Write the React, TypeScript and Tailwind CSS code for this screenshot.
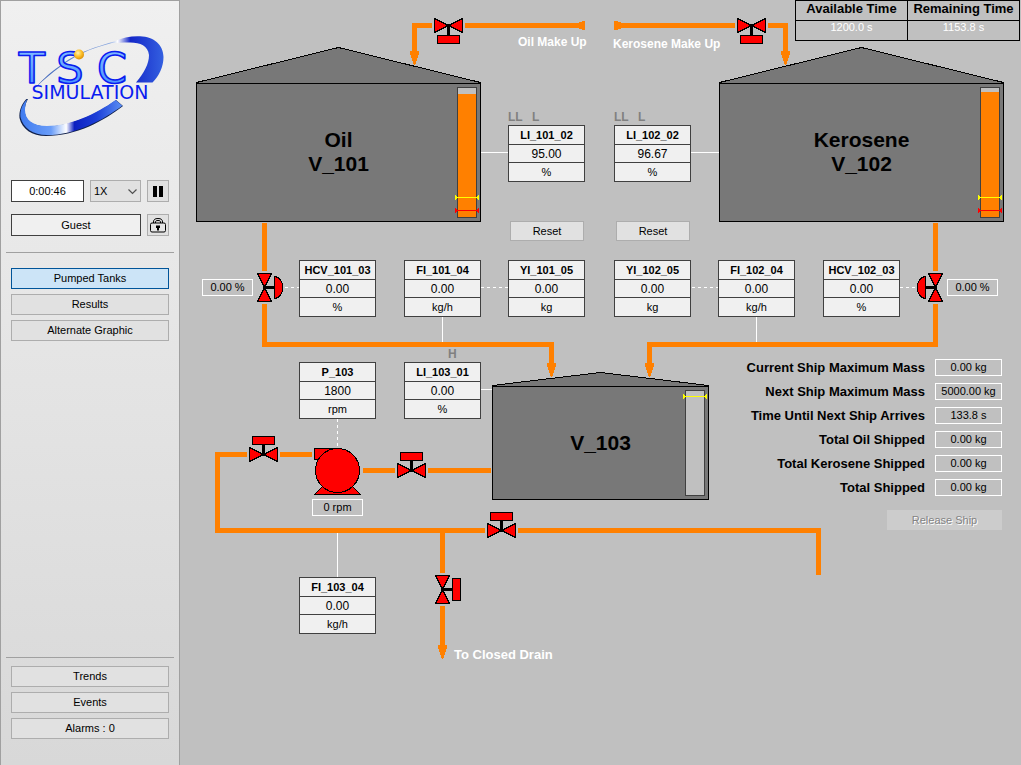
import { useState } from 'react';
import type { ReactNode } from 'react';
import clsx from 'clsx';

type TagData = {
  name: string;
  value: string;
  unit: string;
  place: string;
};

// Positions are canvas pixels, measured from the left edge of the graphic
const tags: TagData[] = [
  { name: 'LI_101_02', value: '95.00', unit: '%', place: 'left-[328px] top-[125px]' },
  { name: 'LI_102_02', value: '96.67', unit: '%', place: 'left-[434px] top-[125px]' },
  { name: 'HCV_101_03', value: '0.00', unit: '%', place: 'left-[119px] top-[260px]' },
  { name: 'FI_101_04', value: '0.00', unit: 'kg/h', place: 'left-[224px] top-[260px]' },
  { name: 'YI_101_05', value: '0.00', unit: 'kg', place: 'left-[328px] top-[260px]' },
  { name: 'YI_102_05', value: '0.00', unit: 'kg', place: 'left-[434px] top-[260px]' },
  { name: 'FI_102_04', value: '0.00', unit: 'kg/h', place: 'left-[538px] top-[260px]' },
  { name: 'HCV_102_03', value: '0.00', unit: '%', place: 'left-[643px] top-[260px]' },
  { name: 'P_103', value: '1800', unit: 'rpm', place: 'left-[119px] top-[362px]' },
  { name: 'LI_103_01', value: '0.00', unit: '%', place: 'left-[224px] top-[362px]' },
  { name: 'FI_103_04', value: '0.00', unit: 'kg/h', place: 'left-[119px] top-[577px]' },
];

const shipRows = [
  ['Current Ship Maximum Mass', '0.00 kg'],
  ['Next Ship Maximum Mass', '5000.00 kg'],
  ['Time Until Next Ship Arrives', '133.8 s'],
  ['Total Oil Shipped', '0.00 kg'],
  ['Total Kerosene Shipped', '0.00 kg'],
  ['Total Shipped', '0.00 kg'],
];

const pages = ['Pumped Tanks', 'Results', 'Alternate Graphic'];

function Logo() {
  return (
    <svg width="152" height="104" viewBox="0 0 152 104" role="img" aria-label="TSC Simulation">
      <defs>
        <linearGradient id="swooshTop" x1="0" y1="0" x2="1" y2="0">
          <stop offset="0" stopColor="#3b62b8" />
          <stop offset="0.58" stopColor="#8aa8e0" />
          <stop offset="0.64" stopColor="#ffffff" />
          <stop offset="0.74" stopColor="#1427c8" />
          <stop offset="1" stopColor="#3460e0" />
        </linearGradient>
        <linearGradient id="swooshBottom" x1="0" y1="0" x2="1" y2="0">
          <stop offset="0" stopColor="#3f7bf0" />
          <stop offset="0.3" stopColor="#6a9df8" />
          <stop offset="0.45" stopColor="#ffffff" />
          <stop offset="0.53" stopColor="#0c1fc0" />
          <stop offset="0.75" stopColor="#1c3fd8" />
          <stop offset="1" stopColor="#5c90f4" />
        </linearGradient>
        <linearGradient id="tube" x1="0" y1="0" x2="0" y2="1">
          <stop offset="0" stopColor="#8cc4ff" />
          <stop offset="1" stopColor="#3d8bff" />
        </linearGradient>
        <radialGradient id="ball" cx="0.4" cy="0.35" r="0.7">
          <stop offset="0" stopColor="#fff3b0" />
          <stop offset="0.5" stopColor="#fdc22d" />
          <stop offset="1" stopColor="#d98a00" />
        </radialGradient>
      </defs>
      <path
        d="M21.500 52.700C30 43 37 37 45 31.500C58 21 72 14.500 100 6.500C108 2.500 118 0.800 126 1.200C140 1.500 149.500 10 149.500 22C149.500 32 145 41 138.500 47.500H122C130 38 135 29 135 20C134 11 126 7.500 116 7.600C108 7.700 103 8 98 8C76 13.500 60 21 46 32C38 38 30 44.500 21.500 52.700Z"
        fill="url(#swooshTop)"
      />
      <path
        d="M12.300 64C7 70 5 76 5.500 83C8 94 18 101 32 101C62 101 90 86 109 71L102 65C82 80 56 91.500 32 91.500C18 91 10.500 85 10.800 75C11 71 12 67 14 64Z"
        fill="#10204a"
      />
      <path
        d="M13.300 64C7.500 70 6 76 6.500 82C9 93 19 100 33 100C62 100 89 85 108.300 70.700L101.700 65C82 79 56 91 33 91C19 91 11 85 11 75C11 71 12 67 13.300 64Z"
        fill="url(#swooshBottom)"
      />
      <g
        fill="url(#tube)"
        stroke="#0a1cf0"
        strokeWidth="1.6"
        strokeLinejoin="round"
        textAnchor="middle"
        className="font-['DejaVu_Sans'] text-[43px]"
      >
        <text x="18" y="48">T</text>
        <text x="56" y="48">S</text>
        <text x="98" y="48">C</text>
      </g>
      <text x="76" y="64" fill="#0a1cf0" textAnchor="middle" className="font-['DejaVu_Sans'] text-[19px]">
        SIMULATION
      </text>
      <circle cx="65" cy="19.500" r="5" fill="url(#ball)" />
    </svg>
  );
}

function LockIcon() {
  return (
    <svg width="16" height="15" viewBox="0 0 16 15" fill="none" stroke="black">
      <path d="M3.500 5V4C3.500 1.500 5 0.500 8 0.500C11 0.500 12.500 1.500 12.500 4V5M5.500 5V4C5.500 3 6 2.500 8 2.500C10 2.500 10.500 3 10.500 4V5" />
      <rect x="0.500" y="5" width="15" height="9" rx="1.500" fill="#e6e6e6" />
      <path d="M6 7.500H10V10H9V12.500H7V10H6Z" fill="black" stroke="none" />
    </svg>
  );
}

function SideButton({ active, onClick, children }: { active?: boolean; onClick?: () => void; children: ReactNode }) {
  return (
    <button
      onClick={onClick}
      className={clsx(
        'h-[21px] border text-center leading-none',
        active ? 'border-[#005499] bg-[#cce4f7]' : 'border-[#adadad] bg-[#e1e1e1]'
      )}
    >
      {children}
    </button>
  );
}

function Sidebar() {
  const [page, setPage] = useState('Pumped Tanks');
  const iconButton = 'flex size-[22px] items-center justify-center border border-[#adadad] bg-[#e1e1e1]';

  return (
    <aside className="flex w-[180px] shrink-0 flex-col border border-b-0 border-[#a0a0a0] bg-linear-to-b from-[#f0f0f0] to-[#d8d8d8] px-[5px] pt-[34px] pb-[26px]">
      <div className="flex justify-center">
        <Logo />
      </div>

      <div className="mt-[41px] flex flex-col gap-3 px-[5px]">
        <div className="flex justify-between">
          <input
            readOnly
            aria-label="Simulation time"
            value="0:00:46"
            className="h-[22px] w-[73px] border border-[#404040] bg-white text-center"
          />
          <div className="relative">
            <select
              aria-label="Speed"
              className="h-[22px] w-[51px] appearance-none border border-[#adadad] bg-[#e1e1e1] pl-[3px]"
            >
              <option>1X</option>
              <option>2X</option>
              <option>5X</option>
            </select>
            <svg
              width="9"
              height="6"
              viewBox="0 0 9 6"
              fill="none"
              stroke="#505050"
              strokeWidth="1.2"
              className="pointer-events-none absolute top-[9px] right-1"
            >
              <path d="M0.500 0.500L4.500 4.500L8.500 0.500" />
            </svg>
          </div>
          <button aria-label="Pause" className={iconButton}>
            <svg width="10" height="11" viewBox="0 0 10 11">
              <path d="M0 0H4V11H0ZM6 0H10V11H6Z" />
            </svg>
          </button>
        </div>
        <div className="flex justify-between">
          <button className="h-[22px] w-[130px] border border-[#404040] bg-[#f0f0f0] leading-none">Guest</button>
          <button aria-label="Lock" className={iconButton}>
            <LockIcon />
          </button>
        </div>
      </div>

      <hr className="mt-4 border-[#a0a0a0]" />
      <nav className="mt-[15px] flex flex-col gap-[5px] px-[5px]">
        {pages.map(p => (
          <SideButton key={p} active={p === page} onClick={() => setPage(p)}>
            {p}
          </SideButton>
        ))}
      </nav>

      <div className="mt-auto">
        <hr className="border-[#a0a0a0]" />
        <div className="mt-2 flex flex-col gap-[5px] px-[5px]">
          <SideButton>Trends</SideButton>
          <SideButton>Events</SideButton>
          <SideButton>Alarms : 0</SideButton>
        </div>
      </div>
    </aside>
  );
}

function Tag({ name, value, unit, place }: TagData) {
  return (
    <div
      className={clsx(
        'absolute grid w-[77px] grid-rows-[19px_18px_18px] divide-y divide-[#404040] border border-[#404040] bg-[#f0f0f0] text-center',
        place
      )}
    >
      <div className="leading-[18px] font-bold">{name}</div>
      <div className="text-xs leading-[18px]">{value}</div>
      <div className="leading-[18px]">{unit}</div>
    </div>
  );
}

function Readout({ className, children }: { className?: string; children: ReactNode }) {
  return (
    <output className={clsx('block h-[17px] border border-white text-center leading-[15px]', className)}>
      {children}
    </output>
  );
}

// Block valve, or control valve when it has a dome. The actuator hangs below at turn = 0.
function Valve({ x, y, turn = 0, dome }: { x: number; y: number; turn?: number; dome?: boolean }) {
  return (
    <g transform={`translate(${x} ${y}) rotate(${turn})`} fill="#ff0000" stroke="black">
      <path d="M-14 -7L0 0L-14 7ZM14 -7L0 0L14 7Z" />
      <path d="M0 0V10" strokeWidth="3" />
      <path d="M-2.500 0H2.500" strokeWidth="3" />
      {dome ? <path d="M-11 10H11C10 21 -10 21 -11 10Z" /> : <rect x="-11" y="10" width="22" height="8" />}
    </g>
  );
}

function Arrow({ x, y }: { x: number; y: number }) {
  return <path transform={`translate(${x} ${y})`} d="M-4.500 -14H4.500V-11L0.500 0H-0.500L-4.500 -11Z" fill="#ff8000" />;
}

function Marker({ x, y, color }: { x: number; y: number; color: string }) {
  return (
    <g transform={`translate(${x} ${y})`} fill={color}>
      <path d="M0 0H24V1H0Z" />
      <path d="M0 -2H1V-1H2V2H1V3H0ZM24 -2H23V-1H22V2H23V3H24Z" />
    </g>
  );
}

type TankProps = {
  x: number;
  apex: number;
  top: number;
  width: number;
  bottom: number;
  level: number;
};

function Tank({ x, apex, top, width, bottom, level }: TankProps) {
  const barX = x + width - 23;
  const barHeight = bottom - top - 9;
  const fill = Math.round((barHeight - 1) * level);

  return (
    <g stroke="black">
      <path
        d={`M${x} ${bottom}V${top}L${x + width / 2} ${apex}L${x + width} ${top}V${bottom}Z`}
        fill="#787878"
      />
      <path d={`M${x} ${top + 1}H${x + width}`} />
      <rect x={barX} y={top + 5} width="19" height={barHeight} fill="#c0c0c0" stroke="#404040" />
      {level > 0 && (
        <rect
          x={barX + 0.5}
          y={top + 4.5 + barHeight - fill}
          width="18"
          height={fill}
          fill="#ff8000"
          stroke="none"
        />
      )}
    </g>
  );
}

function ProcessDrawing() {
  return (
    <svg className="absolute inset-0 size-full" shapeRendering="crispEdges" fill="none" aria-hidden="true">
      {/* Signal lines */}
      <g stroke="white">
        <path d="M301 152.500H328M511 152.500H539M262.500 317V342M576.500 317V342M301 389.500H312M157.500 533V577" />
        <path
          d="M105 287.500H119M301 287.500H328M512 287.500H538M720 287.500H737M157.500 419V447"
          strokeDasharray="3 3"
        />
      </g>

      <Tank x={16.5} apex={47.5} top={82.5} width={284} bottom={221.5} level={0.95} />
      <Tank x={539.5} apex={47.5} top={82.5} width={284} bottom={221.5} level={0.967} />
      <Tank x={312.5} apex={372.5} top={385.5} width={216} bottom={499.5} level={0} />

      {/* Pipes */}
      <g stroke="#ff8000" strokeWidth="5">
        <path d="M252 25.500H234.500V52M285 25.500H405M434 25.500H555M588 25.500H605.500V52" />
        <path d="M84.500 223V271M84.500 304V344.500H371.500V364" />
        <path d="M755.500 223V271M755.500 304V344.500H469.500V364" />
        <path d="M311 470.500H248M215 470.500H183M132 454.500H100M67 454.500H37.500V530.500H305" />
        <path d="M338 530.500H638.500V575M262.500 530.500V573M262.500 606V646" />
      </g>
      <path d="M397 23L403 21H405V30H403L397 28ZM442 23L436 21H434V30H436L442 28Z" fill="#ff8000" />
      <Arrow x={234.5} y={65} />
      <Arrow x={605.5} y={65} />
      <Arrow x={371.5} y={377} />
      <Arrow x={469.5} y={377} />
      <Arrow x={262.5} y={659} />

      <Marker x={275} y={197} color="#ffff00" />
      <Marker x={275} y={210} color="#ff0000" />
      <Marker x={798} y={197} color="#ffff00" />
      <Marker x={798} y={210} color="#ff0000" />
      <Marker x={503} y={396} color="#ffff00" />

      <Valve x={268.5} y={25.5} />
      <Valve x={571.5} y={25.5} />
      <Valve x={84.5} y={287.5} turn={-90} dome />
      <Valve x={755.5} y={287.5} turn={90} dome />
      <Valve x={83.5} y={454.5} turn={180} />
      <Valve x={231.5} y={470.5} turn={180} />
      <Valve x={321.5} y={530.5} turn={180} />
      <Valve x={262.5} y={589.5} turn={-90} />

      {/* Pump */}
      <g fill="#ff0000" stroke="black">
        <path d="M134.500 494.500L157.500 472L180.500 494.500Z" />
        <path d="M134.500 448.500H158V459.500H134.500Z" />
        <circle cx="157.500" cy="470.500" r="22" />
      </g>
    </svg>
  );
}

function TankLabel({ className, children }: { className: string; children: ReactNode }) {
  return <div className={clsx('absolute text-center text-[21px] leading-6 font-bold', className)}>{children}</div>;
}

function TimeTable() {
  return (
    <table className="absolute top-0 left-[615px] w-[225px] table-fixed border-collapse text-center">
      <thead>
        <tr className="h-5 align-top text-[13px] leading-4">
          <th className="border border-black p-0 align-top whitespace-nowrap">Available Time</th>
          <th className="border border-black p-0 align-top whitespace-nowrap">Remaining Time</th>
        </tr>
      </thead>
      <tbody>
        <tr className="h-5 align-top leading-3 text-white">
          <td className="border border-black p-0">1200.0 s</td>
          <td className="border border-black p-0">1153.8 s</td>
        </tr>
      </tbody>
    </table>
  );
}

function ShipPanel() {
  return (
    <section className="absolute top-[359px] left-[552px] flex w-[270px] flex-col">
      <dl className="flex flex-col gap-[7px]">
        {shipRows.map(([label, value]) => (
          <div key={label} className="flex items-center justify-end gap-[10px]">
            <dt className="text-[13px] leading-4 font-bold whitespace-nowrap">{label}</dt>
            <dd>
              <Readout className="w-[67px]">{value}</Readout>
            </dd>
          </div>
        ))}
      </dl>
      <button
        disabled
        className="mt-[14px] h-5 w-[115px] self-end bg-[#cccccc] leading-none text-[#838383] text-shadow-[1px_1px_0_white]"
      >
        Release Ship
      </button>
    </section>
  );
}

export default function App() {
  const reset = 'absolute top-[221px] h-5 w-[74px] border border-[#adadad] bg-[#e1e1e1] leading-none';
  const alarm = 'absolute text-xs leading-3 font-bold text-[#808080]';
  const caption = 'absolute font-bold whitespace-nowrap text-white';

  return (
    <div className="flex min-h-screen bg-[#c0c0c0] font-['Liberation_Sans',Arial,sans-serif] text-[11px] text-black">
      <Sidebar />
      <main className="relative flex-1 overflow-hidden">
        <ProcessDrawing />

        <TankLabel className="top-[128px] left-4 w-[285px]">
          Oil
          <br />
          V_101
        </TankLabel>
        <TankLabel className="top-[128px] left-[539px] w-[285px]">
          Kerosene
          <br />
          V_102
        </TankLabel>
        <TankLabel className="top-[431px] left-[312px] w-[217px]">V_103</TankLabel>

        <div className={clsx(caption, 'top-[34px] left-[338px] text-xs')}>Oil Make Up</div>
        <div className={clsx(caption, 'top-[36px] left-[433px] text-xs')}>Kerosene Make Up</div>
        <div className={clsx(caption, 'top-[647px] left-[274px] text-[13px] leading-4')}>To Closed Drain</div>

        <div className={clsx(alarm, 'top-[111px] left-[328px]')}>LL</div>
        <div className={clsx(alarm, 'top-[111px] left-[352px]')}>L</div>
        <div className={clsx(alarm, 'top-[111px] left-[434px]')}>LL</div>
        <div className={clsx(alarm, 'top-[111px] left-[458px]')}>L</div>
        <div className={clsx(alarm, 'top-[348px] left-[268px]')}>H</div>

        {tags.map(tag => (
          <Tag key={tag.name} {...tag} />
        ))}

        <button className={clsx(reset, 'left-[330px]')}>Reset</button>
        <button className={clsx(reset, 'left-[436px]')}>Reset</button>

        <Readout className="absolute top-[279px] left-[22px] w-[51px]">0.00 %</Readout>
        <Readout className="absolute top-[279px] left-[767px] w-[51px]">0.00 %</Readout>
        <Readout className="absolute top-[499px] left-[132px] w-[51px]">0 rpm</Readout>

        <TimeTable />
        <ShipPanel />
      </main>
    </div>
  );
}
